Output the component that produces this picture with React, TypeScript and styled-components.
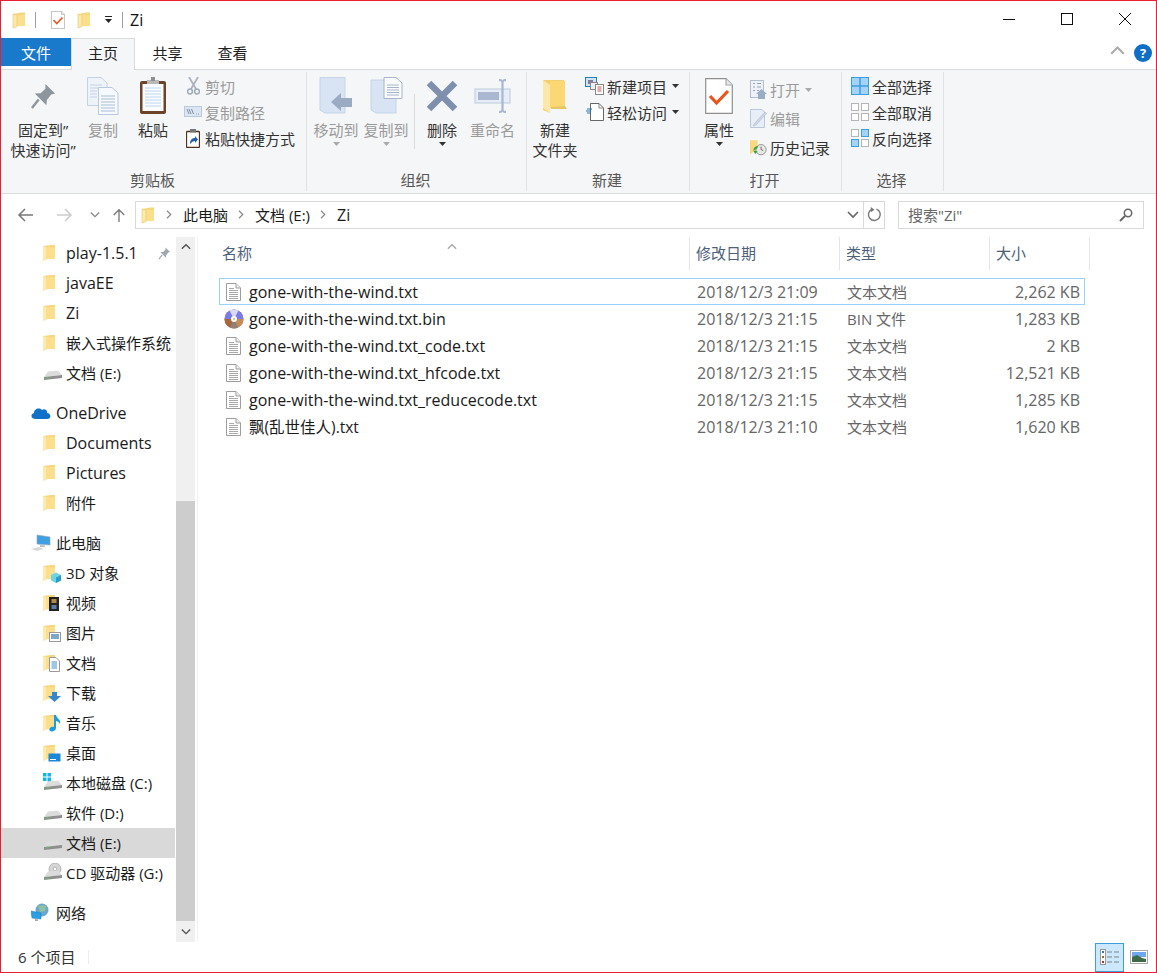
import React, { FC, ReactNode } from "react";
import styled, { createGlobalStyle } from "styled-components";

const GlobalStyle = createGlobalStyle`
	html, body { margin: 0; padding: 0; background: #fff; }
	body { font-family: "Open Sans", "Noto Sans CJK SC", sans-serif; font-size: 15px; color: #1a1a1a; }
	* { box-sizing: border-box; }
`;

/* ---------- icons ---------- */
const Folder: FC<{ size?: number }> = ({ size = 18 }) => (
	<svg width={(size * 14) / 18} height={size} viewBox="0 0 14 18">
		<path d="M1 3 L9 1.5 H13 V15 H5 L1 17 Z" fill="#f6d77f" />
		<path d="M1 3 L5 4 V15.5 L1 17 Z" fill="#fde9a8" />
		<path d="M5 4 H13 V15 H5 Z" fill="#fbdf8d" />
		<path d="M1 3 L5 4 V15.5 L1 17 Z" fill="none" stroke="#e8c670" strokeWidth="0.6" />
	</svg>
);

const SideFolder: FC<{ children?: ReactNode }> = ({ children }) => (
	<svg width="18" height="20" viewBox="0 0 18 20">
		<path d="M0 3 L8 2 H12 V16 H4 L0 18 Z" fill="#f6d77f" />
		<path d="M0 3 L3 4 V16 L0 18 Z" fill="#fdeaae" />
		<path d="M3 4 H12 V16 H3 Z" fill="#fbdf8d" />
		{children}
	</svg>
);

const TextFile: FC = () => (
	<svg width="15" height="18" viewBox="0 0 15 18">
		<path d="M.5 .5 H10 L14.5 5 V17.5 H.5 Z" fill="#fff" stroke="#9d9d9d" />
		<path d="M10 .5 V5 H14.5" fill="#eee" stroke="#9d9d9d" />
		<path d="M3 5.5 H8 M3 7.5 H12 M3 9.5 H12 M3 11.5 H12 M3 13.5 H12 M3 15.5 H12" stroke="#a9a9a9" />
	</svg>
);

const DiscFile: FC = () => (
	<svg width="20" height="20" viewBox="0 0 20 20">
		<circle cx="10" cy="10" r="9.5" fill="#b77a4a" />
		<path d="M.5 10 A9.5 9.5 0 0 1 19.5 10 L10 10 Z" fill="#7a7ae8" />
		<path d="M5.5 1.6 A9.5 9.5 0 0 1 14.5 1.6 L10 10 Z" fill="#d8d8fb" />
		<path d="M.5 10 A9.5 9.5 0 0 0 6 18.6 L10 10 Z" fill="#a8663c" />
		<path d="M19.5 10 A9.5 9.5 0 0 1 14 18.6 L10 10 Z" fill="#c48a58" />
		<path d="M6 18.6 A9.5 9.5 0 0 0 14 18.6 L10 10 Z" fill="#8f8078" />
		<circle cx="10" cy="10" r="3" fill="#fff" />
		<circle cx="10" cy="10" r="1.2" fill="#d7c7b5" />
	</svg>
);

const Drive: FC<{ children?: ReactNode }> = ({ children }) => (
	<svg width="20" height="20" viewBox="0 0 20 20">
		{children}
		<path d="M5 8.5 L15 7.5 L19 12 L1 14 Z" fill="#dcdcdc" />
		<path d="M1 14 L19 12 V15 L1 17 Z" fill="#8f8f8f" />
		<path d="M3 15 L6 14.7" stroke="#58c060" strokeWidth="1" />
	</svg>
);

const Pin: FC<{ size?: number; color?: string }> = ({ size = 12, color = "#a0a6ad" }) => (
	<svg width={size} height={size} viewBox="0 0 26 28">
		<path d="M15 1 L25 11 L21 12 L16.5 17.5 L16 23 L4 11 L10 10.5 L15 6 Z" fill={color} />
		<path d="M8 17 L1 26" stroke={color} strokeWidth="2.5" />
	</svg>
);

const Tri: FC<{ color?: string }> = ({ color = "#333" }) => (
	<svg width="7" height="4" viewBox="0 0 7 4">
		<path d="M0 0 H7 L3.5 4 Z" fill={color} />
	</svg>
);

const CheckDoc: FC<{ w: number; h: number }> = ({ w, h }) => (
	<svg width={w} height={h} viewBox="0 0 28 36">
		<path d="M.7 .7 H21 L27.3 7 V35.3 H.7 Z" fill="#fff" stroke="#8f8f8f" strokeWidth="1.2" />
		<path d="M21 .7 V7 H27.3" fill="#e8e8e8" stroke="#a8a8a8" strokeWidth="1.2" />
		<path d="M5 18 L11.5 25 L23 13" fill="none" stroke="#e8541c" strokeWidth="3.2" />
	</svg>
);

const CopyIcon: FC = () => (
	<svg width="32" height="38" viewBox="0 0 32 38">
		<path d="M.5 .5 H14 L20 6 V28.5 H.5 Z" fill="#eef3fa" stroke="#c5d2e4" />
		<path d="M3 8 H15 M3 11 H15 M3 14 H10 M3 17 H10 M3 20 H10" stroke="#c5d2e4" />
		<path d="M11.5 10.5 H25 L31 16 V37.5 H11.5 Z" fill="#f6f9fd" stroke="#b9c8dd" />
		<path d="M14 19 H28 M14 22 H28 M14 25 H28 M14 28 H28 M14 31 H28 M14 34 H28" stroke="#aabcd6" />
	</svg>
);

const PasteIcon: FC = () => (
	<svg width="28" height="38" viewBox="0 0 28 38">
		<rect x="1" y="4" width="26" height="33" rx="2" fill="#6b4429" />
		<rect x="3.5" y="7" width="21" height="27" fill="#fbfcfe" />
		<path d="M6 11 H22 M6 14 H22 M6 17 H22 M6 20 H22 M6 23 H22 M6 26 H22 M6 29 H22" stroke="#bcd6ee" />
		<rect x="8" y="3" width="12" height="4" fill="#b9b9b9" />
		<rect x="12" y="0" width="4" height="4" fill="#8f8f8f" />
	</svg>
);

const CutIcon: FC = () => (
	<svg width="13" height="18" viewBox="0 0 13 18">
		<path d="M2 0 L9 12 M11 0 L4 12" stroke="#aab3bf" strokeWidth="1.8" fill="none" />
		<circle cx="3" cy="14.5" r="2.4" fill="none" stroke="#9daab9" strokeWidth="1.5" />
		<circle cx="10" cy="14.5" r="2.4" fill="none" stroke="#9daab9" strokeWidth="1.5" />
	</svg>
);

const PathIcon: FC = () => (
	<svg width="18" height="12" viewBox="0 0 18 12">
		<rect x=".5" y=".5" width="17" height="10" fill="#dce5f2" stroke="#bac9dc" />
		<path d="M3 3 L5 8 M5 3 L7 8 M7.5 3 L9.5 8 M12 8 H12.8 M14 8 H14.8" stroke="#7f90a8" />
	</svg>
);

const ShortcutIcon: FC = () => (
	<svg width="14" height="19" viewBox="0 0 14 19">
		<rect x=".5" y="2.5" width="13" height="16" rx="1" fill="#fff" stroke="#4d3320" strokeWidth="1.3" />
		<rect x="4" y="0" width="6" height="3.5" fill="#777" />
		<path d="M4 15 C4 11 6 9 9 9 V7 L12 10.5 L9 14 V12 C7 12 6 13 4 15 Z" fill="#1f5fa8" />
	</svg>
);

const MoveIcon: FC = () => (
	<svg width="34" height="38" viewBox="0 0 34 38">
		<path d="M1 .5 H26 V33 L26 36 H6 L1 33 Z" fill="#d8e3f3" stroke="#c6d4e8" />
		<path d="M12 25 L22 16 V21 H33 V30 H22 V34 Z" fill="#9aabc3" />
	</svg>
);

const CopyToIcon: FC = () => (
	<svg width="33" height="38" viewBox="0 0 33 38">
		<path d="M1 3 H26 V36 H6 L1 33 Z" fill="#d8e3f3" stroke="#c6d4e8" />
		<path d="M14 .5 H26 L32 6 V21.5 H14 Z" fill="#fafbfd" stroke="#a6b5c9" />
		<path d="M17 8 H29 M17 10.5 H29 M17 13 H29 M17 15.5 H29 M17 18 H29" stroke="#a6b5c9" />
	</svg>
);

const DeleteIcon: FC = () => (
	<svg width="32" height="32" viewBox="0 0 32 32">
		<path d="M3 3 L29 29 M29 3 L3 29" stroke="#7f90ae" strokeWidth="6.5" />
	</svg>
);

const RenameIcon: FC = () => (
	<svg width="38" height="34" viewBox="0 0 38 34">
		<rect x="1" y="10" width="35" height="14" fill="#e6edf7" stroke="#bccade" />
		<rect x="4" y="13" width="21" height="8" fill="#a9b8d0" />
		<path d="M25 1 C28 1 28.5 2 28.5 4 V30 C28.5 32 28 33 25 33 M32 1 C29 1 28.5 2 28.5 4 M32 33 C29 33 28.5 32 28.5 30" fill="none" stroke="#a9b8d0" strokeWidth="2.2" />
	</svg>
);

const NewFolderIcon: FC = () => (
	<svg width="24" height="35" viewBox="0 0 24 35">
		<path d="M0 1 H21 V29 H7 L7 34 L0 31 Z" fill="#f4cf70" />
		<path d="M7 2 H22 V29 H7 Z" fill="#fbd873" />
		<path d="M0 1 L7 6 V34 L0 29 Z" fill="#fde8a9" />
		<path d="M22 27 L24 30 H8 V28 Z" fill="#e6c468" />
	</svg>
);

const NewItemIcon: FC = () => (
	<svg width="19" height="18" viewBox="0 0 19 18">
		<rect x=".5" y=".5" width="11" height="9" fill="#cfe3f3" stroke="#2a7fb5" />
		<rect x="3" y="3" width="5" height="4" fill="#8a7a9a" />
		<rect x="5.5" y="5.5" width="7" height="7" fill="#eee" stroke="#888" />
		<rect x="10.5" y="7.5" width="8" height="10" fill="#fff" stroke="#888" />
		<path d="M12.5 10 H16.5 M12.5 12 H16.5 M12.5 14 H16.5" stroke="#c05a5a" />
	</svg>
);

const EasyIcon: FC = () => (
	<svg width="18" height="18" viewBox="0 0 18 18">
		<path d="M4.5 .5 H13 L17.5 5 V17.5 H4.5 Z" fill="#fff" stroke="#666" />
		<path d="M13 .5 V5 H17.5" fill="none" stroke="#888" />
		<path d="M1 6 H6 M0 8 H5 M1 10 H4" stroke="#2478b8" />
	</svg>
);

const OpenIcon: FC = () => (
	<svg width="17" height="19" viewBox="0 0 17 19">
		<rect x=".5" y=".5" width="13" height="17" fill="#eef2f8" stroke="#b2bfd0" />
		<path d="M3 3.5 H5 M3 7 H5 M3 10.5 H5 M7 3.5 H11 M7 7 H11 M7 10.5 H9" stroke="#94a4ba" />
		<path d="M11.5 9 L17 14 H15 V19 H8 V14 H6 Z" fill="#9bacc3" />
	</svg>
);

const EditIcon: FC = () => (
	<svg width="17" height="19" viewBox="0 0 17 19">
		<path d="M.5 .5 H12 L14.5 3 V18.5 H.5 Z" fill="#e8eef7" stroke="#bac8da" />
		<path d="M4 15 L15 3 L16.5 4.5 L6 16 L3.5 17 Z" fill="#cdd6e2" stroke="#a9b6c7" strokeWidth=".5" />
	</svg>
);

const HistoryIcon: FC = () => (
	<svg width="20" height="19" viewBox="0 0 20 19">
		<path d="M0 1 H9 V15 H3 L0 18 Z" fill="#f8d981" />
		<circle cx="13" cy="12" r="6" fill="#e8e8e8" stroke="#8a8a8a" />
		<path d="M13 8.5 V12 L15.5 13" fill="none" stroke="#555" />
		<path d="M4 13 A5 5 0 0 1 10 8 L8 11 Z M4 13 L9 14 L6 17 Z" fill="#3aa34a" />
	</svg>
);

const SelectGrid: FC<{ on: boolean[] }> = ({ on }) => {
	const blue = "#3b9ee0";
	const cells = [
		[0, 0],
		[10, 0],
		[0, 10],
		[10, 10],
	];
	return (
		<svg width="18" height="18" viewBox="0 0 18 18">
			{cells.map(([x, y], i) => (
				<rect
					key={i}
					x={x + 0.5}
					y={y + 0.5}
					width="7"
					height="7"
					fill={on[i] ? "#a4d3f5" : "#fff"}
					stroke={on[i] ? blue : "#b5b5b5"}
				/>
			))}
		</svg>
	);
};

const AllSelect: FC = () => (
	<svg width="18" height="18" viewBox="0 0 18 18">
		<rect x=".5" y=".5" width="17" height="17" fill="#a4d3f5" stroke="#3b9ee0" />
		<path d="M9 0 V18 M0 9 H18" stroke="#3b9ee0" strokeWidth="1.5" />
	</svg>
);

const Chevron: FC<{ dir: "up" | "down" | "right"; color?: string; w?: number }> = ({ dir, color = "#666", w = 10 }) => {
	const d = { up: "M1 7 L6 2 L11 7", down: "M1 3 L6 8 L11 3", right: "M4 1 L9 6 L4 11" }[dir];
	return (
		<svg width={w} height={w} viewBox="0 0 12 12">
			<path d={d} fill="none" stroke={color} strokeWidth="1.6" />
		</svg>
	);
};

const ArrowNav: FC<{ dir: "left" | "right" | "up"; color: string }> = ({ dir, color }) => {
	const d = {
		left: "M16 8 H2 M8 2 L2 8 L8 14",
		right: "M0 8 H14 M8 2 L14 8 L8 14",
		up: "M8 16 V2 M2 8 L8 2 L14 8",
	}[dir];
	return (
		<svg width="16" height="16" viewBox="0 0 16 16">
			<path d={d} fill="none" stroke={color} strokeWidth="1.5" />
		</svg>
	);
};

const overlayCube = (
	<>
		<path d="M8 12 L13 9.5 L18 12 V17.5 L13 20 L8 17.5 Z" fill="#6fd3e6" />
		<path d="M13 14.5 L18 12 V17.5 L13 20 Z" fill="#2a9fc4" />
	</>
);
const overlayFilm = (
	<>
		<rect x="6" y="4" width="10" height="14" fill="#222" />
		<rect x="8.5" y="6" width="5" height="4" fill="#b08a4a" />
		<rect x="8.5" y="12" width="5" height="4" fill="#5a7ab0" />
	</>
);
const overlayPic = (
	<>
		<rect x="6.5" y="9.5" width="11" height="9" fill="#fff" stroke="#999" />
		<rect x="8" y="11" width="8" height="5" fill="#7fa6c8" />
	</>
);
const overlayDoc = (
	<>
		<path d="M6.5 4.5 H13 L16.5 8 V18.5 H6.5 Z" fill="#fff" stroke="#999" />
		<path d="M8.5 9 H14 M8.5 11 H14 M8.5 13 H14 M8.5 15 H14" stroke="#3b8fd0" />
	</>
);
const overlayDown = <path d="M9 9 H14 V13 H18 L11.5 19 L5 13 H9 Z" fill="#3a86cc" />;
const overlayMusic = <path d="M11 2 H13 C14 6 18 6 17 11 C16 9 14 8 13 8 V15 C13 18 9 19 7 18 C5 16 8 13 11 14 Z" fill="#1e9be0" />;
const overlayDesk = (
	<>
		<rect x="5.5" y="10.5" width="12" height="8" fill="#1e88d8" />
		<rect x="7" y="16" width="6" height="1" fill="#fff" />
	</>
);

const OneDriveIcon: FC = () => (
	<svg width="20" height="14" viewBox="0 0 20 14">
		<path d="M4 13 C0 13 -1 8 3 7 C3 3 8 1 11 4 C14 2 17 5 16 7 C20 7 21 13 16 13 Z" fill="#0f72c8" />
	</svg>
);

const PcIcon: FC = () => (
	<svg width="20" height="18" viewBox="0 0 20 18">
		<path d="M6 1 L19 3 V11 L6 10 Z" fill="#3f9fe0" stroke="#8fa8bb" strokeWidth=".6" />
		<path d="M9 11 L14 11.5 V13 L9 13 Z" fill="#bbb" />
		<path d="M0 15 L8 13 L13 15 L6 17 Z" fill="#d8d8d8" />
	</svg>
);

const NetIcon: FC = () => (
	<svg width="20" height="20" viewBox="0 0 20 20">
		<circle cx="11" cy="7" r="6.5" fill="#6ca6c8" />
		<path d="M7 2 C10 4 12 1 15 3 L14 8 L9 9 Z" fill="#8ec2a0" />
		<path d="M0 8 L10 10 V16 L1 15 Z" fill="#29a0e4" stroke="#1876b0" strokeWidth=".5" />
		<path d="M4 16 L7 16.5 V18 L4 18 Z" fill="#aaa" />
	</svg>
);

const WinDrive: FC = () => (
	<Drive>
		<path d="M0 0 H3.5 V3.5 H0 Z M4.5 -.5 H8 V3.5 H4.5 Z M0 4.5 H3.5 V8 H0 Z M4.5 4.5 H8 V8.5 H4.5 Z" fill="#12b5ea" />
	</Drive>
);

const CdDrive: FC = () => (
	<Drive>
		<circle cx="12" cy="6" r="6" fill="#d5d5d5" stroke="#999" strokeWidth=".6" />
		<circle cx="12" cy="6" r="1.8" fill="#fff" stroke="#999" strokeWidth=".6" />
	</Drive>
);

/* ---------- window chrome ---------- */
const Latin = styled.span`
	font-size: 16px;
`;

const Window = styled.div`
	width: 1157px;
	height: 973px;
	border: 1px solid #e81e35;
	display: flex;
	flex-direction: column;
	overflow: hidden;
	background: #fff;
`;

const TitleBar = styled.div`
	height: 37px;
	display: flex;
	align-items: center;
	padding-left: 11px;
`;

const QuickSlot = styled.span<{ $w: number }>`
	width: ${(p) => p.$w}px;
	display: flex;
	align-items: center;
`;

const QuickSep = styled.span<{ $after: number }>`
	width: 1px;
	height: 16px;
	background: #a0a0a0;
	margin-right: ${(p) => p.$after}px;
`;

const TitleText = styled.span`
	font-size: 16px;
	line-height: 20px;
	color: #111;
`;

const WinControls = styled.div`
	margin-left: auto;
	display: flex;
	align-items: center;
	height: 100%;
	margin-top: -1px;
	padding-right: 2px;
`;

const WinBtn = styled.span`
	width: 58px;
	display: flex;
	justify-content: center;
	align-items: center;
`;

const TabBar = styled.div`
	height: 31px;
	display: flex;
	align-items: stretch;
	position: relative;
`;

const FileTab = styled.div`
	width: 70px;
	height: 28px;
	background: #1979ca;
	color: #fff;
	display: flex;
	align-items: center;
	justify-content: center;
`;

const Tab = styled.div<{ $active?: boolean }>`
	width: ${(p) => (p.$active ? 64 : 65)}px;
	height: ${(p) => (p.$active ? 32 : 29)}px;
	display: flex;
	align-items: center;
	justify-content: center;
	color: #222;
	padding-bottom: ${(p) => (p.$active ? 4 : 0)}px;
	background: ${(p) => (p.$active ? "#f5f6f7" : "transparent")};
	border: ${(p) => (p.$active ? "1px solid #dadbdc" : "none")};
	border-bottom: none;
	position: relative;
	z-index: 1;
`;

const TabRight = styled.div`
	margin-left: auto;
	display: flex;
	align-items: center;
	gap: 9px;
	padding: 0 4px 2px 0;
`;

const HelpDot = styled.span`
	width: 18px;
	height: 18px;
	border-radius: 50%;
	background: #0f6fc6;
	color: #fff;
	font-size: 13px;
	font-weight: 700;
	display: flex;
	align-items: center;
	justify-content: center;
`;

/* ---------- ribbon ---------- */
const Ribbon = styled.div`
	height: 125px;
	background: #f5f6f7;
	border-top: 1px solid #dadbdc;
	border-bottom: 1px solid #dadbdc;
	display: flex;
	padding-top: 2px;
`;

const Group = styled.div<{ $w: number }>`
	width: ${(p) => p.$w}px;
	height: 119px;
	border-right: 1px solid #e1e2e3;
	display: flex;
	flex-direction: column;
`;

const GroupBody = styled.div<{ $pad?: number }>`
	flex: 1;
	display: flex;
	padding-left: ${(p) => p.$pad ?? 0}px;
`;

const GroupLabel = styled.div`
	height: 22px;
	text-align: center;
	padding-right: 2px;
	font-size: 15px;
	line-height: 22px;
	color: #555;
`;

const LargeBtn = styled.div<{ $w: number; $off?: boolean }>`
	width: ${(p) => p.$w}px;
	display: flex;
	flex-direction: column;
	align-items: center;
	font-size: 15px;
	line-height: 20px;
	white-space: nowrap;
	color: ${(p) => (p.$off ? "#9a9a9a" : "#333")};
`;

const LargeIcon = styled.div`
	height: 48px;
	display: flex;
	align-items: center;
	justify-content: center;
`;

const CaretRow = styled.div`
	height: 10px;
	display: flex;
	align-items: center;
	justify-content: center;
	margin-top: -1px;
`;

const VSep = styled.div`
	width: 1px;
	height: 55px;
	background: #dadbdc;
	margin: 22px 0 0 3px;
`;

const SmallCol = styled.div<{ $pitch: number; $top: number; $ml?: number }>`
	display: flex;
	flex-direction: column;
	padding-top: ${(p) => p.$top}px;
	margin-left: ${(p) => p.$ml ?? 0}px;
	& > * {
		height: ${(p) => p.$pitch}px;
	}
`;

const SmallBtn = styled.div<{ $off?: boolean }>`
	display: flex;
	align-items: center;
	font-size: 15px;
	white-space: nowrap;
	color: ${(p) => (p.$off ? "#9a9a9a" : "#333")};
`;

const SmallIcon = styled.span<{ $w: number }>`
	width: ${(p) => p.$w}px;
	display: flex;
	align-items: center;
	justify-content: center;
	flex: none;
	margin-right: 3px;
`;

const Caret = styled.span`
	margin-left: 5px;
	display: inline-flex;
	align-items: center;
`;

/* ---------- address bar ---------- */
const AddressRow = styled.div`
	height: 43px;
	display: flex;
	align-items: center;
	padding: 0 0 2px 16px;
`;

const NavBtn = styled.span<{ $w: number }>`
	width: ${(p) => p.$w}px;
	flex: none;
	display: flex;
	align-items: center;
	justify-content: flex-start;
`;

const AddressBox = styled.div`
	width: 750px;
	height: 28px;
	border: 1px solid #d9d9d9;
	display: flex;
	align-items: center;
	padding-left: 5px;
	margin-left: 9px;
`;

const Crumb = styled.span<{ $first?: boolean }>`
	color: #222;
	font-size: 14px;
	margin: 0 10px 0 ${(p) => (p.$first ? 9 : 8)}px;
	display: flex;
	align-items: center;
`;

const AddressEnd = styled.div`
	margin-left: auto;
	display: flex;
	align-items: center;
	height: 100%;
`;

const AddressDrop = styled.span`
	width: 22px;
	height: 100%;
	display: flex;
	align-items: center;
	justify-content: center;
	border-right: 1px solid #d9d9d9;
`;

const Refresh = styled.span`
	width: 20px;
	display: flex;
	justify-content: center;
`;

const SearchBox = styled.div`
	width: 246px;
	height: 28px;
	margin-left: 13px;
	border: 1px solid #d9d9d9;
	display: flex;
	align-items: center;
	justify-content: space-between;
	padding: 0 10px 0 9px;
	color: #666;
	font-size: 15px;
`;

/* ---------- body ---------- */
const Main = styled.div`
	flex: 1;
	display: flex;
	min-height: 0;
`;

const Sidebar = styled.nav`
	width: 174px;
	flex: none;
	padding-top: 1px;
`;

const NavGroup = styled.div`
	margin-bottom: 10px;
`;

const NavItem = styled.div<{ $level: number; $active?: boolean }>`
	height: 30px;
	display: flex;
	align-items: center;
	white-space: nowrap;
	padding-left: ${(p) => (p.$level === 1 ? 30 : 42)}px;
	background: ${(p) => (p.$active ? "#d9d9d9" : "transparent")};
	color: #1a1a1a;
`;

const NavIcon = styled.span<{ $level: number }>`
	width: ${(p) => (p.$level === 1 ? 25 : 23)}px;
	display: flex;
	align-items: center;
	flex: none;
`;

const NavLabel = styled.span<{ $latin?: boolean }>`
	font-size: ${(p) => (p.$latin ? 16 : 15)}px;
	margin-bottom: ${(p) => (p.$latin ? 0 : 2)}px;
`;

const NavPin = styled.span`
	margin-left: auto;
	padding-right: 4px;
	display: flex;
`;

const ScrollBar = styled.div`
	width: 19px;
	flex: none;
	margin-left: 1px;
	background: #f0f0f0;
	display: flex;
	flex-direction: column;
`;

const ScrollArrow = styled.div`
	height: 21px;
	display: flex;
	align-items: center;
	justify-content: center;
`;

const ScrollGap = styled.div`
	height: 243px;
`;

const ScrollThumb = styled.div`
	flex: 1;
	background: #cdcdcd;
`;

const Content = styled.section`
	flex: 1;
	margin-left: 2px;
	border-left: 1px solid #f2f2f2;
	padding-left: 21px;
	min-width: 0;
`;

const HeaderRow = styled.div`
	display: grid;
	grid-template-columns: 471px 150px 150px 100px;
	height: 33px;
	position: relative;
`;

const HeaderCell = styled.div<{ $pad: number }>`
	border-right: 1px solid #e5e5e5;
	padding: 0 0 2px ${(p) => p.$pad}px;
	display: flex;
	align-items: center;
	font-size: 15px;
	color: #4c607a;
`;

const SortArrow = styled.span`
	position: absolute;
	left: 228px;
	top: 0;
`;

const FileList = styled.div`
	margin-top: 8px;
`;

const FileRow = styled.div<{ $selected?: boolean }>`
	width: 866px;
	height: 27px;
	display: grid;
	grid-template-columns: 470px 150px 150px 94px;
	align-items: center;
	border: 1px solid ${(p) => (p.$selected ? "#99d1ff" : "transparent")};
`;

const NameCell = styled.div<{ $cjk?: boolean }>`
	display: flex;
	align-items: center;
	padding-left: 4px;
	font-size: ${(p) => (p.$cjk ? 15.5 : 16)}px;
	color: #1a1a1a;
	white-space: nowrap;
`;

const FileIcon = styled.span<{ $disc?: boolean }>`
	width: 25px;
	padding-left: ${(p) => (p.$disc ? 0 : 2)}px;
	display: flex;
	justify-content: flex-start;
	flex: none;
`;

const MetaCell = styled.div<{ $right?: boolean; $wide?: boolean }>`
	color: #666;
	font-size: ${(p) => (p.$wide ? 16 : 15)}px;
	white-space: nowrap;
	text-align: ${(p) => (p.$right ? "right" : "left")};
	padding-left: ${(p) => (p.$right ? 0 : 7)}px;
	padding-right: ${(p) => (p.$right ? 4 : 0)}px;
`;

/* ---------- status bar ---------- */
const StatusBar = styled.footer`
	height: 30px;
	display: flex;
	align-items: center;
	padding-left: 17px;
	color: #333;
	font-size: 15px;
`;

const StatusText = styled.span`
	margin-bottom: 2px;
`;

const StatusSep = styled.span`
	width: 1px;
	height: 14px;
	background: #ececec;
	margin-left: 13px;
`;

const ViewBtns = styled.div`
	margin-left: auto;
	display: flex;
	align-items: center;
	padding-right: 3px;
`;

const ViewBtn = styled.span<{ $on?: boolean }>`
	width: 29px;
	height: 29px;
	display: flex;
	align-items: center;
	justify-content: center;
	border: 1px solid ${(p) => (p.$on ? "#3c9fd8" : "transparent")};
	background: ${(p) => (p.$on ? "#cce8ff" : "transparent")};
`;

/* ---------- data ---------- */
const files = [
	{ name: "gone-with-the-wind.txt", date: "2018/12/3 21:09", type: "文本文档", size: "2,262 KB", selected: true },
	{ name: "gone-with-the-wind.txt.bin", date: "2018/12/3 21:15", type: "BIN 文件", size: "1,283 KB", disc: true },
	{ name: "gone-with-the-wind.txt_code.txt", date: "2018/12/3 21:15", type: "文本文档", size: "2 KB" },
	{ name: "gone-with-the-wind.txt_hfcode.txt", date: "2018/12/3 21:15", type: "文本文档", size: "12,521 KB" },
	{ name: "gone-with-the-wind.txt_reducecode.txt", date: "2018/12/3 21:15", type: "文本文档", size: "1,285 KB" },
	{ name: "飘(乱世佳人).txt", date: "2018/12/3 21:10", type: "文本文档", size: "1,620 KB", cjk: true },
];

type NavEntry = { label: string; level: number; icon: ReactNode; pin?: boolean; active?: boolean; latin?: boolean };

const navGroups: NavEntry[][] = [
	[
		{ label: "play-1.5.1", level: 2, icon: <SideFolder />, pin: true, latin: true },
		{ label: "javaEE", level: 2, icon: <SideFolder />, latin: true },
		{ label: "Zi", level: 2, icon: <SideFolder />, latin: true },
		{ label: "嵌入式操作系统", level: 2, icon: <SideFolder /> },
		{ label: "文档 (E:)", level: 2, icon: <Drive /> },
	],
	[
		{ label: "OneDrive", level: 1, icon: <OneDriveIcon />, latin: true },
		{ label: "Documents", level: 2, icon: <SideFolder />, latin: true },
		{ label: "Pictures", level: 2, icon: <SideFolder />, latin: true },
		{ label: "附件", level: 2, icon: <SideFolder /> },
	],
	[
		{ label: "此电脑", level: 1, icon: <PcIcon /> },
		{ label: "3D 对象", level: 2, icon: <SideFolder>{overlayCube}</SideFolder> },
		{ label: "视频", level: 2, icon: <SideFolder>{overlayFilm}</SideFolder> },
		{ label: "图片", level: 2, icon: <SideFolder>{overlayPic}</SideFolder> },
		{ label: "文档", level: 2, icon: <SideFolder>{overlayDoc}</SideFolder> },
		{ label: "下载", level: 2, icon: <SideFolder>{overlayDown}</SideFolder> },
		{ label: "音乐", level: 2, icon: <SideFolder>{overlayMusic}</SideFolder> },
		{ label: "桌面", level: 2, icon: <SideFolder>{overlayDesk}</SideFolder> },
		{ label: "本地磁盘 (C:)", level: 2, icon: <WinDrive /> },
		{ label: "软件 (D:)", level: 2, icon: <Drive /> },
		{ label: "文档 (E:)", level: 2, icon: <Drive />, active: true },
		{ label: "CD 驱动器 (G:)", level: 2, icon: <CdDrive /> },
	],
	[{ label: "网络", level: 1, icon: <NetIcon /> }],
];

const App: FC = () => {
	return (
		<>
			<GlobalStyle />
			<Window>
				<TitleBar>
					<QuickSlot $w={23}>
						<Folder />
					</QuickSlot>
					<QuickSep $after={15} />
					<QuickSlot $w={26}>
						<CheckDoc w={14} h={18} />
					</QuickSlot>
					<QuickSlot $w={28}>
						<Folder />
					</QuickSlot>
					<QuickSlot $w={17}>
						<svg width="7" height="7" viewBox="0 0 7 7">
							<path d="M0 0 H7 V1 H0 Z M0 3 H7 L3.5 7 Z" fill="#222" />
						</svg>
					</QuickSlot>
					<QuickSep $after={7} />
					<TitleText>Zi</TitleText>
					<WinControls>
						<WinBtn>
							<svg width="12" height="12" viewBox="0 0 12 12">
								<path d="M0 6.5 H12" stroke="#111" />
							</svg>
						</WinBtn>
						<WinBtn>
							<svg width="12" height="12" viewBox="0 0 12 12">
								<rect x=".5" y=".5" width="11" height="11" fill="none" stroke="#111" />
							</svg>
						</WinBtn>
						<WinBtn>
							<svg width="12" height="12" viewBox="0 0 12 12">
								<path d="M0 0 L12 12 M12 0 L0 12" stroke="#111" />
							</svg>
						</WinBtn>
					</WinControls>
				</TitleBar>

				<TabBar>
					<FileTab>文件</FileTab>
					<Tab $active>主页</Tab>
					<Tab>共享</Tab>
					<Tab>查看</Tab>
					<TabRight>
						<Chevron dir="up" color="#aaa" w={15} />
						<HelpDot>?</HelpDot>
					</TabRight>
				</TabBar>

				<Ribbon>
					<Group $w={306}>
						<GroupBody $pad={4}>
							<LargeBtn $w={76}>
								<LargeIcon>
									<Pin size={27} color="#8d959d" />
								</LargeIcon>
								<span>固定到”</span>
								<span>快速访问”</span>
							</LargeBtn>
							<LargeBtn $w={44} $off>
								<LargeIcon>
									<CopyIcon />
								</LargeIcon>
								<span>复制</span>
							</LargeBtn>
							<LargeBtn $w={56}>
								<LargeIcon>
									<PasteIcon />
								</LargeIcon>
								<span>粘贴</span>
							</LargeBtn>
							<SmallCol $pitch={26} $top={1} $ml={3}>
								<SmallBtn $off>
									<SmallIcon $w={18}>
										<CutIcon />
									</SmallIcon>
									剪切
								</SmallBtn>
								<SmallBtn $off>
									<SmallIcon $w={18}>
										<PathIcon />
									</SmallIcon>
									复制路径
								</SmallBtn>
								<SmallBtn>
									<SmallIcon $w={18}>
										<ShortcutIcon />
									</SmallIcon>
									粘贴快捷方式
								</SmallBtn>
							</SmallCol>
						</GroupBody>
						<GroupLabel>剪贴板</GroupLabel>
					</Group>

					<Group $w={220}>
						<GroupBody $pad={4}>
							<LargeBtn $w={50} $off>
								<LargeIcon>
									<MoveIcon />
								</LargeIcon>
								<span>移动到</span>
								<CaretRow>
									<Tri color="#aaa" />
								</CaretRow>
							</LargeBtn>
							<LargeBtn $w={50} $off>
								<LargeIcon>
									<CopyToIcon />
								</LargeIcon>
								<span>复制到</span>
								<CaretRow>
									<Tri color="#aaa" />
								</CaretRow>
							</LargeBtn>
							<VSep />
							<LargeBtn $w={54}>
								<LargeIcon>
									<DeleteIcon />
								</LargeIcon>
								<span>删除</span>
								<CaretRow>
									<Tri />
								</CaretRow>
							</LargeBtn>
							<LargeBtn $w={47} $off>
								<LargeIcon>
									<RenameIcon />
								</LargeIcon>
								<span>重命名</span>
							</LargeBtn>
						</GroupBody>
						<GroupLabel>组织</GroupLabel>
					</Group>

					<Group $w={163}>
						<GroupBody $pad={5}>
							<LargeBtn $w={46}>
								<LargeIcon>
									<NewFolderIcon />
								</LargeIcon>
								<span>新建</span>
								<span>文件夹</span>
							</LargeBtn>
							<SmallCol $pitch={26} $top={1} $ml={7}>
								<SmallBtn>
									<SmallIcon $w={19}>
										<NewItemIcon />
									</SmallIcon>
									新建项目
									<Caret>
										<Tri />
									</Caret>
								</SmallBtn>
								<SmallBtn>
									<SmallIcon $w={19}>
										<EasyIcon />
									</SmallIcon>
									轻松访问
									<Caret>
										<Tri />
									</Caret>
								</SmallBtn>
							</SmallCol>
						</GroupBody>
						<GroupLabel>新建</GroupLabel>
					</Group>

					<Group $w={152}>
						<GroupBody $pad={4}>
							<LargeBtn $w={50}>
								<LargeIcon>
									<CheckDoc w={28} h={36} />
								</LargeIcon>
								<span>属性</span>
								<CaretRow>
									<Tri />
								</CaretRow>
							</LargeBtn>
							<SmallCol $pitch={29} $top={3} $ml={6}>
								<SmallBtn $off>
									<SmallIcon $w={17}>
										<OpenIcon />
									</SmallIcon>
									打开
									<Caret>
										<Tri color="#aaa" />
									</Caret>
								</SmallBtn>
								<SmallBtn $off>
									<SmallIcon $w={17}>
										<EditIcon />
									</SmallIcon>
									编辑
								</SmallBtn>
								<SmallBtn>
									<SmallIcon $w={17}>
										<HistoryIcon />
									</SmallIcon>
									历史记录
								</SmallBtn>
							</SmallCol>
						</GroupBody>
						<GroupLabel>打开</GroupLabel>
					</Group>

					<Group $w={102}>
						<GroupBody $pad={9}>
							<SmallCol $pitch={26} $top={1}>
								<SmallBtn>
									<SmallIcon $w={18}>
										<AllSelect />
									</SmallIcon>
									全部选择
								</SmallBtn>
								<SmallBtn>
									<SmallIcon $w={18}>
										<SelectGrid on={[false, false, false, false]} />
									</SmallIcon>
									全部取消
								</SmallBtn>
								<SmallBtn>
									<SmallIcon $w={18}>
										<SelectGrid on={[false, true, true, false]} />
									</SmallIcon>
									反向选择
								</SmallBtn>
							</SmallCol>
						</GroupBody>
						<GroupLabel>选择</GroupLabel>
					</Group>
				</Ribbon>

				<AddressRow>
					<NavBtn $w={40}>
						<ArrowNav dir="left" color="#777" />
					</NavBtn>
					<NavBtn $w={33}>
						<ArrowNav dir="right" color="#ccc" />
					</NavBtn>
					<NavBtn $w={22}>
						<Chevron dir="down" color="#888" />
					</NavBtn>
					<NavBtn $w={14}>
						<ArrowNav dir="up" color="#777" />
					</NavBtn>
					<AddressBox>
						<Folder />
						<Crumb $first>
							<Chevron dir="right" color="#888" w={9} />
						</Crumb>
						此电脑
						<Crumb>
							<Chevron dir="right" color="#888" w={9} />
						</Crumb>
						文档 (E:)
						<Crumb>
							<Chevron dir="right" color="#888" w={9} />
						</Crumb>
						<Latin>Zi</Latin>
						<AddressEnd>
							<AddressDrop>
								<Chevron dir="down" color="#666" w={12} />
							</AddressDrop>
							<Refresh>
								<svg width="15" height="15" viewBox="0 0 16 16">
									<path d="M10 2.2 A6.3 6.3 0 1 1 5 2.5" fill="none" stroke="#777" strokeWidth="1.5" />
									<path d="M4 0 L8 3 L4 5.5 Z" fill="#777" />
								</svg>
							</Refresh>
						</AddressEnd>
					</AddressBox>
					<SearchBox>
						搜索"Zi"
						<svg width="14" height="14" viewBox="0 0 14 14">
							<circle cx="9" cy="5" r="3.7" fill="none" stroke="#666" strokeWidth="1.5" />
							<path d="M6 8 L1 13" stroke="#666" strokeWidth="2" />
						</svg>
					</SearchBox>
				</AddressRow>

				<Main>
					<Sidebar>
						{navGroups.map((group, g) => (
							<NavGroup key={g}>
								{group.map((item) => (
									<NavItem key={item.label + item.level} $level={item.level} $active={item.active}>
										<NavIcon $level={item.level}>{item.icon}</NavIcon>
										<NavLabel $latin={item.latin}>{item.label}</NavLabel>
										{item.pin && (
											<NavPin>
												<Pin size={13} />
											</NavPin>
										)}
									</NavItem>
								))}
							</NavGroup>
						))}
					</Sidebar>
					<ScrollBar>
						<ScrollArrow>
							<Chevron dir="up" color="#505050" />
						</ScrollArrow>
						<ScrollGap />
						<ScrollThumb />
						<ScrollArrow>
							<Chevron dir="down" color="#505050" />
						</ScrollArrow>
					</ScrollBar>
					<Content>
						<HeaderRow>
							<SortArrow>
								<Chevron dir="up" color="#a8a8a8" w={10} />
							</SortArrow>
							<HeaderCell $pad={3}>名称</HeaderCell>
							<HeaderCell $pad={6}>修改日期</HeaderCell>
							<HeaderCell $pad={6}>类型</HeaderCell>
							<HeaderCell $pad={6}>大小</HeaderCell>
						</HeaderRow>
						<FileList>
							{files.map((file) => (
								<FileRow key={file.name} $selected={file.selected}>
									<NameCell $cjk={file.cjk}>
										<FileIcon $disc={file.disc}>{file.disc ? <DiscFile /> : <TextFile />}</FileIcon>
										{file.name}
									</NameCell>
									<MetaCell $wide>{file.date}</MetaCell>
									<MetaCell>{file.type}</MetaCell>
									<MetaCell $right $wide>
										{file.size}
									</MetaCell>
								</FileRow>
							))}
						</FileList>
					</Content>
				</Main>

				<StatusBar>
					<StatusText>6 个项目</StatusText>
					<StatusSep />
					<ViewBtns>
						<ViewBtn $on>
							<svg width="19" height="16" viewBox="0 0 19 16">
								<rect x=".5" y=".5" width="5" height="15" fill="#fff" stroke="#999" />
								<rect x="2" y="2" width="2" height="2" fill="#2a7fb5" />
								<rect x="2" y="7" width="2" height="2" fill="#a86a2a" />
								<rect x="2" y="12" width="2" height="2" fill="#cc2a1a" />
								<path d="M7 3 H12 M14 3 H19 M7 8 H12 M14 8 H19 M7 13 H12 M14 13 H19" stroke="#808080" />
							</svg>
						</ViewBtn>
						<ViewBtn>
							<svg width="18" height="14" viewBox="0 0 18 14">
								<rect x=".5" y=".5" width="17" height="13" fill="#fff" stroke="#a8a8a8" />
								<rect x="2" y="2" width="14" height="5" fill="#6fa8f0" />
								<path d="M2 7 L7 5 L12 8 L16 9 V12 H2 Z" fill="#3f6a4a" />
							</svg>
						</ViewBtn>
					</ViewBtns>
				</StatusBar>
			</Window>
		</>
	);
};

export default App;
